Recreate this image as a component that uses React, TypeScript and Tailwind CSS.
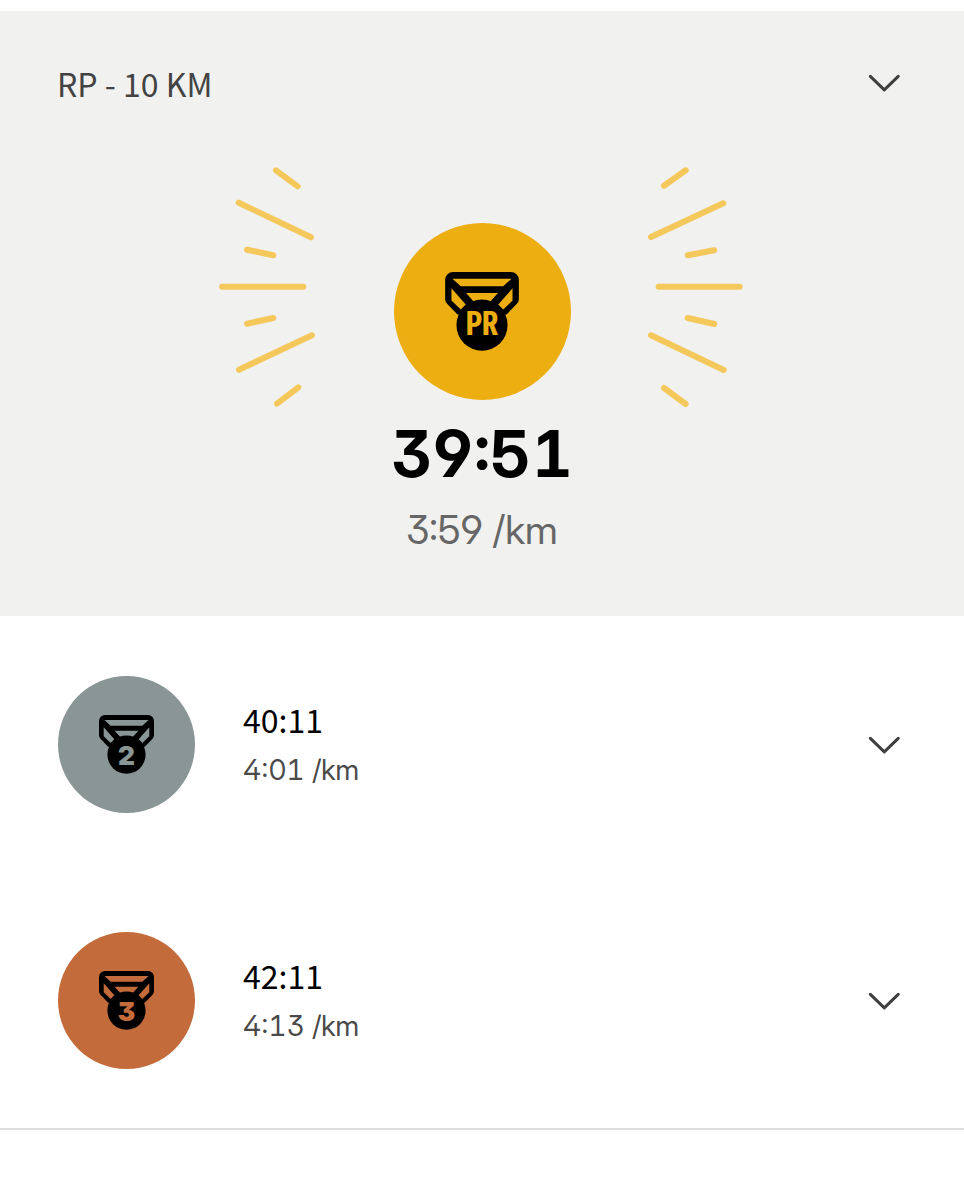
type MedalProps = { label: string; size: string; className: string; labelClass: string; fontSize: number; baseline: number };

function Medal({ label, size, className, labelClass, fontSize, baseline }: MedalProps) {
  return (
    <div className={`flex shrink-0 justify-center rounded-full ${className}`}>
      <svg viewBox="0 0 222 238" className={size} role="img" aria-label={`Medal ${label}`}>
        <path
          fillRule="evenodd"
          d="M24 0H198A24 24 0 0 1 222 24V82Q222 90 216 96L185 128H37L6 96Q0 90 0 82V24A24 24 0 0 1 24 0ZM22 20L47 43H175L200 20ZM19 49V86L47 113L62 98ZM63 63L85 88H137L159 63ZM203 49L160 98L175 113L203 86Z"
        />
        <circle cx="111" cy="160" r="77" />
        <text x="111" y={baseline} textAnchor="middle" fontSize={fontSize} fill="currentColor" className={labelClass}>
          {label}
        </text>
      </svg>
    </div>
  );
}

function ExpandButton({ label }: { label: string }) {
  return (
    <button type="button" aria-label={label} className="shrink-0 cursor-pointer text-[#3f3f3f]">
      <svg viewBox="0 0 32 18" className="block h-[18px] w-8" fill="none" stroke="currentColor" strokeWidth="3" strokeLinecap="round" strokeLinejoin="round">
        <path d="M2.4 2.4L16.3 15.8L30.2 2.4" />
      </svg>
    </button>
  );
}

const rays = [
  "M60 7.3L81.7 23.3",
  "M22.7 39.7L95 74.3",
  "M31 86.7L57.3 92.3",
  "M6 123.7H87.3",
  "M31 160.7L57.3 155",
  "M23 206.7L96 172.3",
  "M61 240.7L82.3 224.3",
  "M448 22.7L469.7 7.3",
  "M435 74L507.3 40.3",
  "M471.7 92.3L498.3 87.3",
  "M442.7 123.7H523.7",
  "M471.7 155L498.3 161",
  "M435 172.3L507.7 207",
  "M448 225L469.7 241",
];

const efforts = [
  { rank: "2", time: "40:11", pace: "4:01 /km", color: "bg-[#8a9595] text-[#8a9595]" },
  { rank: "3", time: "42:11", pace: "4:13 /km", color: "bg-[#c36b3a] text-[#c36b3a]" },
];

export default function App() {
  return (
    <main className="bg-white pt-[11px] font-['Inter_Display','Inter',sans-serif] text-black [font-feature-settings:'cv02','cv04','cv09']">
      <section className="flex flex-col bg-[#f1f1ef] pt-[50px] pb-[62px]">
        <header className="flex h-11 items-center justify-between pr-16 pl-[57px]">
          <h1 className="font-['Noto_Sans_CJK_SC',sans-serif] text-[32px] leading-10 text-[#434343]">RP - 10 KM</h1>
          <ExpandButton label="Expand 10 km record" />
        </header>
        <div className="mt-[58px] grid place-items-center">
          <svg viewBox="0 0 532 246" className="col-start-1 row-start-1 h-[246px] w-[532px]" fill="none" stroke="#f5c85b" strokeWidth="6" strokeLinecap="round" aria-hidden="true">
            {rays.map((d) => (
              <path key={d} d={d} />
            ))}
          </svg>
          <div className="col-start-1 row-start-1 pt-[51px]">
            <Medal
              label="PR"
              size="mt-[49px] h-[79px] w-[74px]"
              className="h-[177px] w-[177px] bg-[#edae11] text-[#edae11]"
              labelClass="font-['Noto_Sans_Mono_CJK_SC',sans-serif] font-bold"
              fontSize={98}
              baseline={191}
            />
          </div>
        </div>
        <p className="mt-[9px] text-center text-[64px] leading-[72px] font-bold [font-feature-settings:'cv02','cv04','cv09','tnum']">39:51</p>
        <p className="mt-4 text-center text-[39px] leading-[48px] text-[#666666]">3:59 /km</p>
      </section>
      <ul className="border-b-2 border-[#dedede]">
        {efforts.map((effort) => (
          <li key={effort.rank} className="flex items-center gap-12 pt-[60px] pr-16 pb-[59px] pl-[58px]">
            <Medal
              label={effort.rank}
              size="mt-[39px] h-[59px] w-[55px]"
              className={`h-[137px] w-[137px] ${effort.color}`}
              labelClass="font-['Inter',sans-serif] font-black"
              fontSize={106}
              baseline={202}
            />
            <div className="flex-1">
              <p className="font-['Noto_Sans_CJK_SC',sans-serif] text-[32px] leading-[51px]">{effort.time}</p>
              <p className="text-[28px] leading-[51px] text-[#4a4a4a] [font-feature-settings:'cv02','cv04','cv09','tnum']">{effort.pace}</p>
            </div>
            <ExpandButton label={`Expand ${effort.time}`} />
          </li>
        ))}
      </ul>
    </main>
  );
}
